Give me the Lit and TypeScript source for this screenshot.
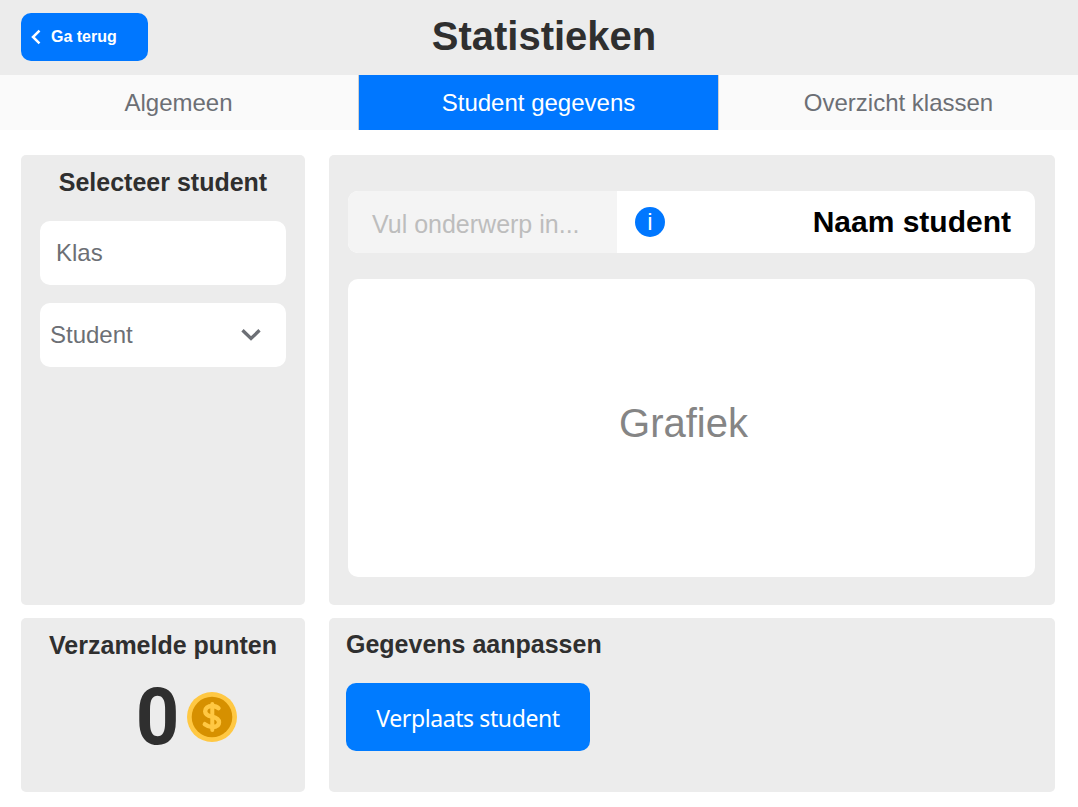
import { LitElement, html, css } from "lit";
import { customElement, state } from "lit/decorators.js";

@customElement("coin-icon")
class CoinIcon extends LitElement {
  static styles = css`
    :host { display: block; width: 50px; height: 50px; }
    svg { display: block; }
  `;
  render() {
    return html`<svg width="50" height="50" viewBox="0 0 50 50" fill="none">
      <circle cx="25" cy="25" r="25" fill="#ffc843" />
      <circle cx="25" cy="25" r="20.3" fill="#d69000" />
      <path d="M31.500 16.200C30 14.600 27.800 14 25 14C20.800 14 18.200 16 18.200 19.200C18.200 22.600 21 23.800 25 24.700C29.400 25.700 32 27 32 30.300C32 33.500 29.200 35 25.200 35C22 35 19.800 33.700 17.800 32.200"
        stroke="#ffc843" stroke-width="4.400" stroke-linecap="round" />
      <path d="M25.300 12V38" stroke="#ffc843" stroke-width="4" stroke-linecap="round" />
    </svg>`;
  }
}

@customElement("app-root")
class AppRoot extends LitElement {
  @state() private active = 1;

  private tabs = ["Algemeen", "Student gegevens", "Overzicht klassen"];

  static styles = css`
    :host {
      display: flex;
      flex-direction: column;
      height: 807px;
      background: #fff;
      color: #2f2f2f;
      font-family: "Liberation Sans", Arial, sans-serif;
      overflow: hidden;
    }
    * { box-sizing: border-box; }
    button { border: 0; margin: 0; font-family: inherit; cursor: pointer; }
    h1, h2 { margin: 0; }
    .header {
      display: grid;
      grid-template-columns: 127px 1fr 127px;
      align-items: start;
      height: 75px;
      padding: 13px 11px 0 21px;
      background: #ececec;
    }
    .back {
      display: flex;
      align-items: center;
      gap: 10px;
      height: 48px;
      padding: 0 0 0 10px;
      border-radius: 10px;
      background: #0077ff;
      color: #fff;
      font-size: 16px;
      font-weight: 700;
    }
    .back svg { margin-bottom: 1px; }
    .title {
      font-size: 40px;
      line-height: 46px;
      text-align: center;
    }
    .tabs {
      display: grid;
      grid-template-columns: 359px 360px 359px;
      height: 55px;
    }
    .tab {
      padding: 0 1px 0 0;
      background: #fafafa;
      color: #6c6f75;
      font-size: 24px;
      border-right: 1px solid #d0d0d0;
    }
    .tab:last-child { padding: 0; border-right: 0; }
    .tab.active { padding: 0; background: #0077ff; color: #fff; }
    .board {
      display: grid;
      grid-template-columns: 284px 726px;
      grid-template-rows: 450px 174px;
      gap: 13px 24px;
      padding: 25px 0 0 21px;
    }
    .panel { border-radius: 5px; background: #ececec; }
    .heading {
      font-size: 25px;
      line-height: 28px;
      text-align: center;
    }
    .select { padding: 13px 19px 0; }
    .fields { display: grid; gap: 18px; margin-top: 25px; }
    .field {
      display: flex;
      align-items: center;
      justify-content: space-between;
      height: 64px;
      padding: 0 24px 0 16px;
      border-radius: 10px;
      background: #fff;
      color: #6c6f75;
      font-size: 24px;
    }
    .field.dropdown { padding-left: 10px; }
    .detail {
      display: flex;
      flex-direction: column;
      gap: 26px;
      padding: 36px 20px 28px 19px;
    }
    .bar {
      display: flex;
      height: 62px;
      border-radius: 10px;
      background: #fff;
      overflow: hidden;
    }
    .subject {
      width: 269px;
      padding: 5px 0 0 24px;
      background: #f4f4f4;
      color: #bdbdbd;
      font-size: 25px;
      line-height: 57px;
    }
    .info {
      width: 30px;
      height: 30px;
      margin: 16px 0 0 18px;
      border-radius: 50%;
      background: #0077ff;
      color: #fff;
      font-size: 24px;
      line-height: 30px;
      text-align: center;
    }
    .name {
      margin-left: auto;
      padding-right: 24px;
      color: #000;
      font-size: 30px;
      font-weight: 700;
      line-height: 61px;
    }
    .chart {
      display: flex;
      flex: 1;
      align-items: center;
      justify-content: center;
      padding: 0 16px 10px 0;
      border-radius: 10px;
      background: #fff;
      color: #858585;
      font-size: 40px;
    }
    .points { padding-top: 13px; }
    .score {
      display: flex;
      align-items: center;
      justify-content: center;
      gap: 7px;
      height: 90px;
      margin-top: 13px;
      padding-left: 46px;
      font-family: Roboto, sans-serif;
      font-size: 80px;
      font-weight: 700;
      line-height: 88px;
    }
    .amount { display: block; transform: translateX(-0.5px) scaleX(0.95); }
    .adjust { padding: 12px 17px 0; }
    .adjust .heading { text-align: left; }
    .move {
      width: 244px;
      height: 68px;
      margin-top: 25px;
      padding: 2px 0 0;
      border-radius: 10px;
      background: #007bff;
      color: #fff;
      font-family: "Noto Sans", sans-serif;
      font-size: 23px;
      letter-spacing: -0.4px;
    }
  `;

  render() {
    return html`
      <header class="header">
        <button class="back">
          <svg width="10" height="16" viewBox="0 0 10 16" fill="none">
            <path d="M8.500 1.600L2 8L8.500 14.400" stroke="#fff" stroke-width="2.500" />
          </svg>
          Ga terug
        </button>
        <h1 class="title">Statistieken</h1>
      </header>
      <nav class="tabs">
        ${this.tabs.map(
          (label, i) => html`<button
            class=${i === this.active ? "tab active" : "tab"}
            @click=${() => (this.active = i)}
          >${label}</button>`
        )}
      </nav>
      <main class="board">
        <section class="panel select">
          <h2 class="heading">Selecteer student</h2>
          <div class="fields">
            <div class="field">Klas</div>
            <div class="field dropdown">
              Student
              <svg width="22" height="14" viewBox="0 0 22 14" fill="none">
                <path d="M2.500 2.300L11 10.500L19.500 2.300" stroke="#6c6f75" stroke-width="3.300" />
              </svg>
            </div>
          </div>
        </section>
        <section class="panel detail">
          <div class="bar">
            <div class="subject">Vul onderwerp in...</div>
            <div class="info">i</div>
            <div class="name">Naam student</div>
          </div>
          <div class="chart">Grafiek</div>
        </section>
        <section class="panel points">
          <h2 class="heading">Verzamelde punten</h2>
          <div class="score"><span class="amount">0</span><coin-icon></coin-icon></div>
        </section>
        <section class="panel adjust">
          <h2 class="heading">Gegevens aanpassen</h2>
          <button class="move">Verplaats student</button>
        </section>
      </main>
    `;
  }
}
